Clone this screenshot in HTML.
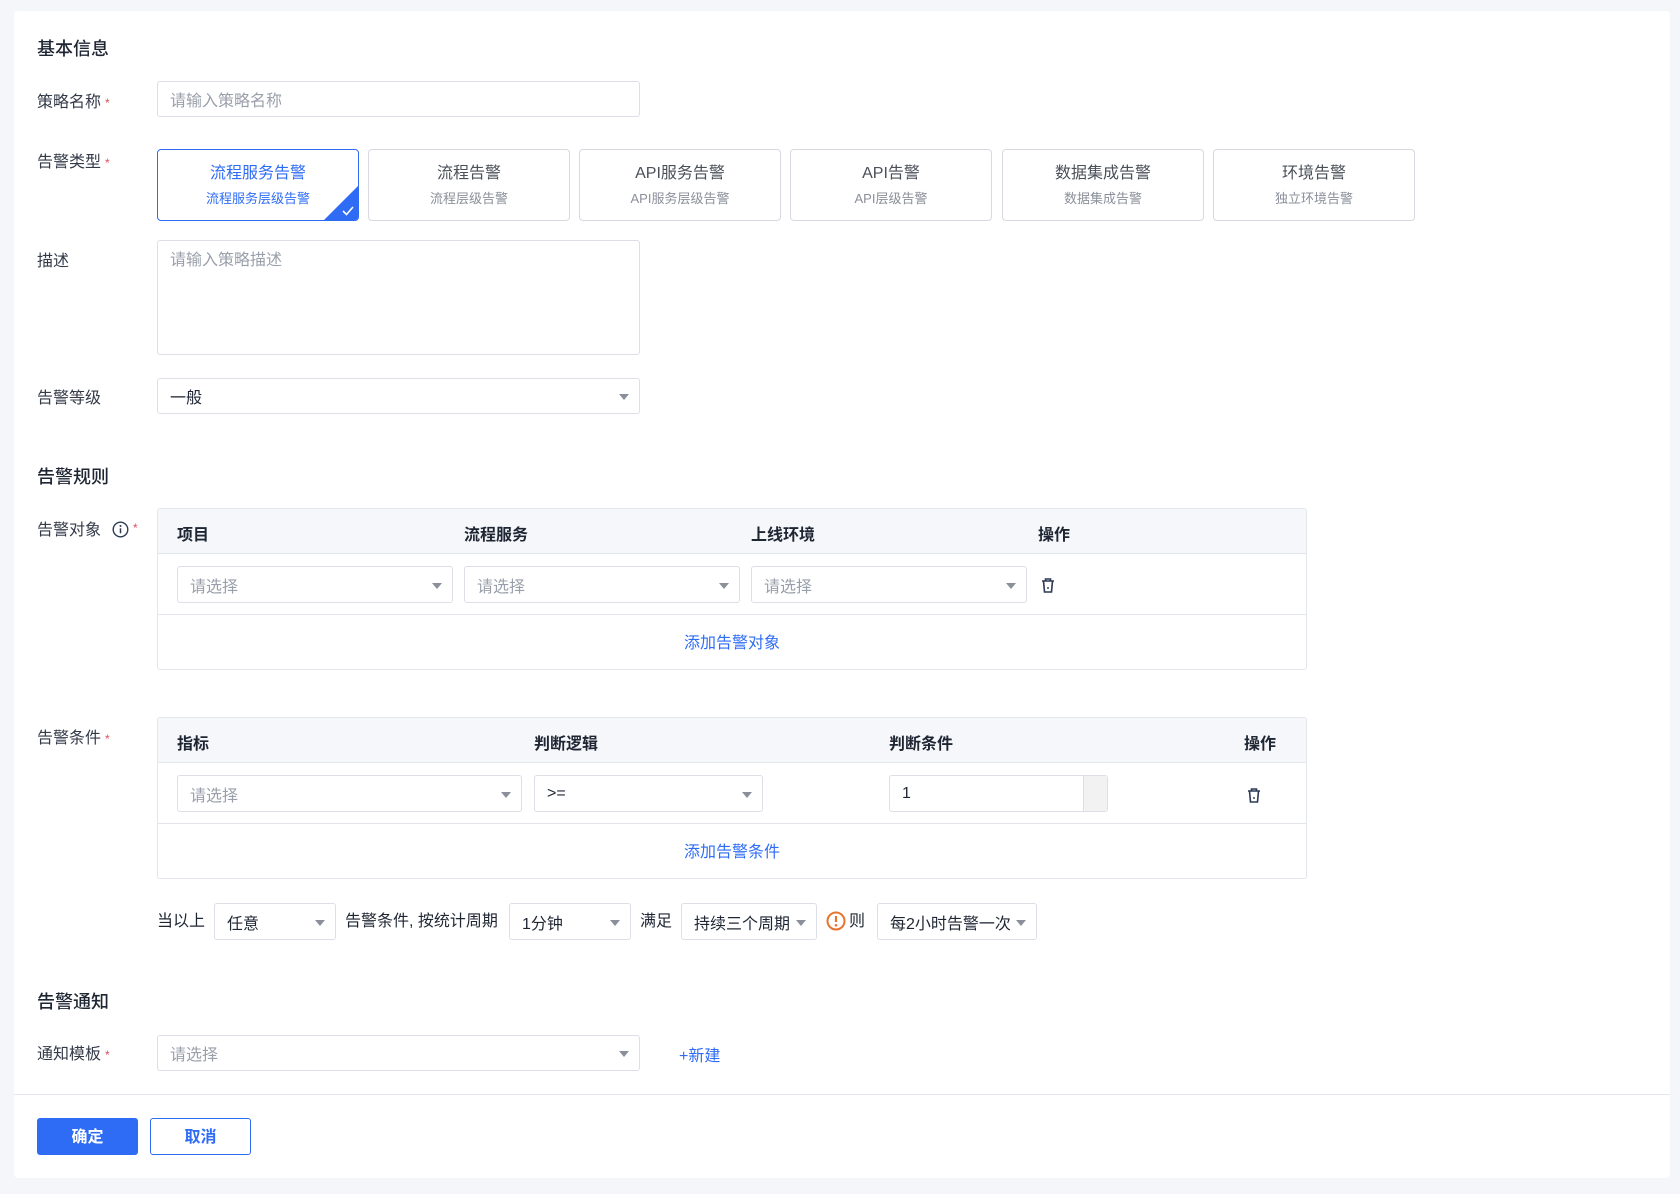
<!DOCTYPE html>
<html><head><meta charset="utf-8"><style>
*{box-sizing:border-box;margin:0;padding:0}
body{width:1680px;height:1194px;background:#f5f6fa;font-family:"Liberation Sans","Noto Sans CJK SC",sans-serif;color:#1f2633;font-size:16px;position:relative;overflow:hidden}
.card{position:absolute;left:14px;top:11px;width:1656px;height:1167px;background:#fff;border-radius:4px}
.a{position:absolute}
.h{font-size:18px;font-weight:500;color:#1f2633}
.lb{font-size:16px;color:#333a48;line-height:20px}
.req::after{content:"*";color:#e34d59;font-size:12px;margin-left:4px;vertical-align:top}
.inp{position:absolute;border:1px solid #dcdfe6;border-radius:3px;background:#fff;font-size:16px;color:#9aa0ab;padding-left:12px;display:flex;align-items:center}
.sel::after{content:"";position:absolute;right:10px;top:50%;margin-top:-2px;border-left:5px solid transparent;border-right:5px solid transparent;border-top:6px solid #8a8f99}
.dark{color:#1f2633}
.tc{position:absolute;top:149px;width:202px;height:72px;border:1px solid #d6d9df;border-radius:4px;text-align:center;overflow:hidden}
.tc .t{margin-top:13px;font-size:16px;color:#4a4f58;line-height:22px}
.tc .s{margin-top:5px;font-size:13px;color:#8a8f99;line-height:18px}
.tc.on{border-color:#2f6cf5}
.tc.on .t,.tc.on .s{color:#2f6cf5}
.tri{position:absolute;right:0;bottom:0;width:0;height:0;border-left:34px solid transparent;border-bottom:34px solid #2f6cf5}
.tbl{position:absolute;left:157px;width:1150px;border:1px solid #e3e6eb;border-radius:3px}
.th{height:45px;background:#f5f7fa;border-bottom:1px solid #e3e6eb;position:relative}
.th span{position:absolute;top:12px;font-weight:bold;font-size:16px;color:#1f2633}
.tr{height:61px;border-bottom:1px solid #e3e6eb;position:relative}
.add{height:54px;text-align:center;line-height:58px;color:#2f6cf5;font-size:16px}
.btn{position:absolute;top:1118px;height:37px;border-radius:3px;font-size:16px;font-weight:bold;text-align:center;line-height:37px}
</style></head><body>
<div class="card"></div>
<div class="a h" style="left:37px;top:35px">基本信息</div>
<div class="a lb req" style="left:37px;top:93px">策略名称</div>
<div class="inp" style="left:157px;top:81px;width:483px;height:36px">请输入策略名称</div>
<div class="a lb req" style="left:37px;top:153px">告警类型</div>
<div class="tc on" style="left:157px"><div class="t">流程服务告警</div><div class="s">流程服务层级告警</div><div class="tri"></div>
<svg class="a" style="right:3px;bottom:3px" width="14" height="12" viewBox="0 0 14 12"><path d="M2 6l3.5 3.5L12 2" fill="none" stroke="#fff" stroke-width="1.6"/></svg></div>
<div class="tc" style="left:368px"><div class="t">流程告警</div><div class="s">流程层级告警</div></div>
<div class="tc" style="left:579px"><div class="t">API服务告警</div><div class="s">API服务层级告警</div></div>
<div class="tc" style="left:790px"><div class="t">API告警</div><div class="s">API层级告警</div></div>
<div class="tc" style="left:1002px"><div class="t">数据集成告警</div><div class="s">数据集成告警</div></div>
<div class="tc" style="left:1213px"><div class="t">环境告警</div><div class="s">独立环境告警</div></div>
<div class="a lb" style="left:37px;top:252px">描述</div>
<div class="inp" style="left:157px;top:240px;width:483px;height:115px;align-items:flex-start;padding-top:5px">请输入策略描述</div>
<div class="a lb" style="left:37px;top:389px">告警等级</div>
<div class="inp sel dark" style="left:157px;top:378px;width:483px;height:36px">一般</div>

<div class="a h" style="left:37px;top:463px">告警规则</div>
<div class="a lb" style="left:37px;top:521px">告警对象</div>
<svg class="a" style="left:112px;top:521px" width="17" height="17" viewBox="0 0 17 17"><circle cx="8.5" cy="8.5" r="7.3" fill="none" stroke="#2d3a55" stroke-width="1.4"/><circle cx="8.5" cy="5" r="1" fill="#2d3a55"/><path d="M8.5 7.3v5" stroke="#2d3a55" stroke-width="1.5"/></svg>
<div class="a" style="left:133px;top:521px;color:#e34d59;font-size:12px">*</div>
<div class="tbl" style="top:508px">
 <div class="th"><span style="left:19px">项目</span><span style="left:306px">流程服务</span><span style="left:593px">上线环境</span><span style="left:880px">操作</span></div>
 <div class="tr">
  <div class="inp sel" style="left:19px;top:12px;width:276px;height:37px">请选择</div>
  <div class="inp sel" style="left:306px;top:12px;width:276px;height:37px">请选择</div>
  <div class="inp sel" style="left:593px;top:12px;width:276px;height:37px">请选择</div>
  <svg class="a" style="left:882px;top:23px" width="16" height="17" viewBox="0 0 16 17"><path d="M2 4h12M5.5 4V2h5v2M3.5 4l1 11h7l1-11" fill="none" stroke="#2d3a55" stroke-width="1.6"/><path d="M7 11h2" stroke="#2d3a55" stroke-width="1.4"/></svg>
 </div>
 <div class="add">添加告警对象</div>
</div>

<div class="a lb req" style="left:37px;top:729px">告警条件</div>
<div class="tbl" style="top:717px">
 <div class="th"><span style="left:19px">指标</span><span style="left:376px">判断逻辑</span><span style="left:731px">判断条件</span><span style="left:1086px">操作</span></div>
 <div class="tr">
  <div class="inp sel" style="left:19px;top:12px;width:345px;height:37px">请选择</div>
  <div class="inp sel dark" style="left:376px;top:12px;width:229px;height:37px">&gt;=</div>
  <div class="inp dark" style="left:731px;top:12px;width:219px;height:37px">1<div class="a" style="right:0;top:0;width:24px;height:35px;background:#f2f2f3;border-left:1px solid #dcdfe6"></div></div>
  <svg class="a" style="left:1088px;top:24px" width="16" height="17" viewBox="0 0 16 17"><path d="M2 4h12M5.5 4V2h5v2M3.5 4l1 11h7l1-11" fill="none" stroke="#2d3a55" stroke-width="1.6"/><path d="M7 11h2" stroke="#2d3a55" stroke-width="1.4"/></svg>
 </div>
 <div class="add">添加告警条件</div>
</div>

<div class="a lb dark" style="left:157px;top:912px">当以上</div>
<div class="inp sel dark" style="left:214px;top:903px;width:122px;height:37px">任意</div>
<div class="a lb dark" style="left:345px;top:912px">告警条件, 按统计周期</div>
<div class="inp sel dark" style="left:509px;top:903px;width:122px;height:37px">1分钟</div>
<div class="a lb dark" style="left:640px;top:912px">满足</div>
<div class="inp sel dark" style="left:681px;top:903px;width:136px;height:37px">持续三个周期</div>
<svg class="a" style="left:826px;top:911px" width="20" height="20" viewBox="0 0 20 20"><circle cx="10" cy="10" r="8.5" fill="none" stroke="#e8742b" stroke-width="2"/><path d="M10 5v6" stroke="#e8742b" stroke-width="2.2"/><circle cx="10" cy="14.3" r="1.3" fill="#e8742b"/></svg>
<div class="a lb dark" style="left:849px;top:912px">则</div>
<div class="inp sel dark" style="left:877px;top:903px;width:160px;height:37px">每2小时告警一次</div>

<div class="a h" style="left:37px;top:988px">告警通知</div>
<div class="a lb req" style="left:37px;top:1045px">通知模板</div>
<div class="inp sel" style="left:157px;top:1035px;width:483px;height:36px">请选择</div>
<div class="a" style="left:679px;top:1042px;color:#2f6cf5;font-size:16px">+新建</div>

<div class="a" style="left:14px;top:1094px;width:1656px;height:1px;background:#e6e7ee"></div>
<div class="btn" style="left:37px;width:101px;background:#2f6cf5;color:#fff;border:1px solid #2f6cf5">确定</div>
<div class="btn" style="left:150px;width:101px;background:#fff;color:#2f6cf5;border:1px solid #2f6cf5">取消</div>
</body></html>
